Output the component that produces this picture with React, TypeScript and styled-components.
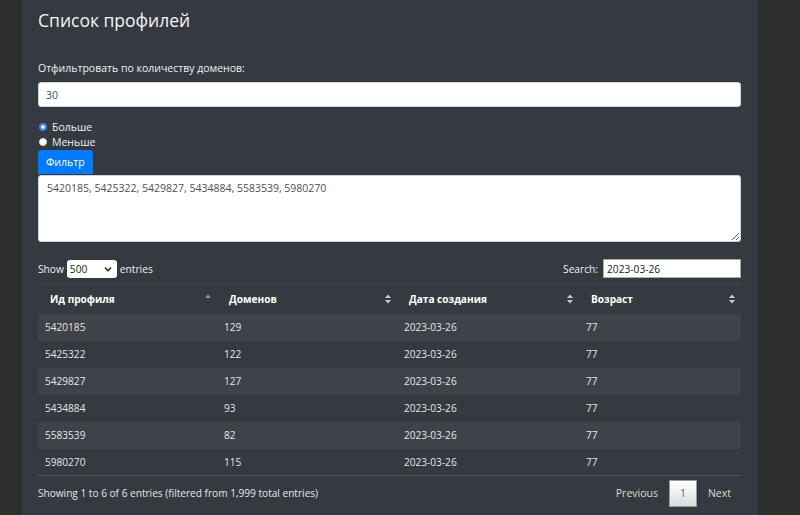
import React from 'react'
import styled, {createGlobalStyle} from 'styled-components'

const GlobalStyle = createGlobalStyle`
  html, body {
    margin: 0;
    padding: 0;
    background: #2d2d2d;
    font-family: 'Open Sans', 'Noto Sans', sans-serif;
  }
  * {
    box-sizing: border-box;
  }
`

interface Profile {
  id: string
  domains: number
  created: string
  age: number
}

const profiles: Profile[] = [
  {id: '5420185', domains: 129, created: '2023-03-26', age: 77},
  {id: '5425322', domains: 122, created: '2023-03-26', age: 77},
  {id: '5429827', domains: 127, created: '2023-03-26', age: 77},
  {id: '5434884', domains: 93, created: '2023-03-26', age: 77},
  {id: '5583539', domains: 82, created: '2023-03-26', age: 77},
  {id: '5980270', domains: 115, created: '2023-03-26', age: 77},
]

const columns = [
  {title: 'Ид профиля', sort: 'asc', width: 179},
  {title: 'Доменов', sort: 'both', width: 180},
  {title: 'Дата создания', sort: 'both', width: 182},
  {title: 'Возраст', sort: 'both', width: 162},
]

function SortIcon({mode}: {mode: string}) {
  return (
    <svg width='6' height='10' viewBox='0 0 6 10'>
      <path d='M0 4 L3 0.5 L6 4 Z' fill={mode === 'asc' ? '#8d93c9' : '#c5c8cc'} />
      {mode === 'both' && <path d='M0 6 L3 9.5 L6 6 Z' fill='#c5c8cc' />}
    </svg>
  )
}

export default function App() {
  return (
    <>
      <GlobalStyle />
      <Page>
        <Panel>
          <Title>Список профилей</Title>
          <Label>Отфильтровать по количеству доменов:</Label>
          <TextInput defaultValue='30' />
          <RadioRow>
            <Radio checked />
            Больше
          </RadioRow>
          <RadioRow>
            <Radio />
            Меньше
          </RadioRow>
          <FilterButton>Фильтр</FilterButton>
          <ResultArea defaultValue='5420185, 5425322, 5429827, 5434884, 5583539, 5980270' />

          <Controls>
            <LengthControl>
              Show
              <SelectWrap>
                <Select defaultValue='500'>
                  <option>10</option>
                  <option>100</option>
                  <option>500</option>
                </Select>
                <Chevron width='8' height='6' viewBox='0 0 8 6'>
                  <path d='M1 1.5 L4 4.5 L7 1.5' stroke='#333' strokeWidth='1.6' fill='none' />
                </Chevron>
              </SelectWrap>
              entries
            </LengthControl>
            <SearchControl>
              Search:
              <SearchInput defaultValue='2023-03-26' />
            </SearchControl>
          </Controls>

          <Table>
            <colgroup>
              {columns.map(c => (
                <col key={c.title} style={{width: c.width}} />
              ))}
            </colgroup>
            <thead>
              <tr>
                {columns.map(c => (
                  <Th key={c.title}>
                    <HeadCell>
                      {c.title}
                      <SortIcon mode={c.sort} />
                    </HeadCell>
                  </Th>
                ))}
              </tr>
            </thead>
            <tbody>
              {profiles.map((p, i) => (
                <Row key={p.id} striped={i % 2 === 0}>
                  <Td>{p.id}</Td>
                  <Td>{p.domains}</Td>
                  <Td>{p.created}</Td>
                  <Td>{p.age}</Td>
                </Row>
              ))}
            </tbody>
          </Table>

          <Footer>
            <Info>Showing 1 to 6 of 6 entries (filtered from 1,999 total entries)</Info>
            <Pager>
              <PageLink>Previous</PageLink>
              <PageCurrent>1</PageCurrent>
              <PageLink>Next</PageLink>
            </Pager>
          </Footer>
        </Panel>
      </Page>
    </>
  )
}

const Page = styled.div`
  display: flex;
  min-height: 515px;
  padding-left: 22px;
`

const Panel = styled.div`
  width: 736px;
  min-height: 515px;
  background: #343a40;
  padding: 6px 17px 0 16px;
  display: flex;
  flex-direction: column;
  color: #f0f0f0;
  font-size: 10.5px;
`

const Title = styled.h3`
  margin: 0;
  font-size: 17.5px;
  font-weight: 400;
  line-height: 28px;
  color: #f4f4f4;
`

const Label = styled.label`
  margin-top: 26px;
  line-height: 16px;
  color: #f0f0f0;
`

const TextInput = styled.input`
  margin-top: 6px;
  height: 25px;
  width: 100%;
  border: 1px solid #ced4da;
  border-radius: 3px;
  padding: 0 7px;
  font: inherit;
  color: #495057;
  background: #fff;
  &:focus {
    outline: none;
  }
`

const RadioRow = styled.div`
  display: flex;
  align-items: center;
  height: 15px;
  gap: 5px;
  padding-left: 1px;
  color: #f0f0f0;
  &:first-of-type {
    margin-top: 12px;
  }
`

const Radio = styled.span<{checked?: boolean}>`
  width: 8px;
  height: 8px;
  border-radius: 50%;
  background: ${props => (props.checked ? '#e8f0fe' : '#fff')};
  border: ${props => (props.checked ? '2px solid #3b82e8' : '1px solid #ddd')};
`

const FilterButton = styled.button`
  align-self: flex-start;
  height: 24px;
  margin-top: 1px;
  padding: 0 8px;
  border: none;
  border-radius: 3px 3px 0 0;
  background: #007bff;
  color: #fff;
  font: inherit;
`

const ResultArea = styled.textarea`
  width: 100%;
  height: 67px;
  margin: 1px 0 0;
  padding: 5px 8px;
  border: 1px solid #ced4da;
  border-radius: 3px;
  font: inherit;
  color: #495057;
  background: #fff;
  resize: vertical;
  &:focus {
    outline: none;
  }
`

const Controls = styled.div`
  display: flex;
  justify-content: space-between;
  align-items: center;
  margin-top: 17px;
  height: 19px;
  font-size: 10.2px;
`

const LengthControl = styled.label`
  display: flex;
  align-items: center;
  gap: 3px;
  color: #f0f0f0;
`

const SelectWrap = styled.span`
  position: relative;
  display: inline-flex;
`

const Select = styled.select`
  appearance: none;
  width: 50px;
  height: 18px;
  border: none;
  border-radius: 3px;
  padding: 0 3px;
  font: inherit;
  color: #222;
  background: #fff;
`

const Chevron = styled.svg`
  position: absolute;
  right: 5px;
  top: 6px;
  pointer-events: none;
`

const SearchControl = styled.label`
  display: flex;
  align-items: center;
  gap: 5px;
  color: #f0f0f0;
`

const SearchInput = styled.input`
  width: 138px;
  height: 19px;
  border: 1px solid #aaa;
  padding: 0 3px;
  font: inherit;
  color: #222;
  background: #fff;
  &:focus {
    outline: none;
  }
`

const Table = styled.table`
  margin-top: 6px;
  width: 100%;
  border-collapse: collapse;
  table-layout: fixed;
  border-top: 1px solid #3c4147;
  border-bottom: 1px solid #50555b;
  font-size: 10.1px;
`

const Th = styled.th`
  height: 29px;
  padding: 0 6px 0 12px;
  text-align: left;
  font-weight: 700;
  color: #fff;
`

const HeadCell = styled.span`
  display: flex;
  justify-content: space-between;
  align-items: center;
`

const Row = styled.tr<{striped: boolean}>`
  background: ${props => (props.striped ? '#3e4249' : 'transparent')};
`

const Td = styled.td`
  height: 27px;
  padding: 0 7px;
  color: #e6e6e6;
`

const Footer = styled.div`
  display: flex;
  justify-content: space-between;
  align-items: center;
  margin-top: 3px;
  height: 28px;
  font-size: 10.1px;
`

const Info = styled.div`
  color: #e6e6e6;
`

const Pager = styled.div`
  display: flex;
  align-items: center;
  gap: 11px;
  padding-right: 10px;
  font-size: 10.5px;
`

const PageLink = styled.span`
  color: #dcdcdc;
`

const PageCurrent = styled.span`
  width: 28px;
  height: 27px;
  display: flex;
  align-items: center;
  justify-content: center;
  border: 1px solid #9a9a9a;
  background: linear-gradient(to bottom, #fff 0%, #dcdcdc 100%);
  color: #666;
`
